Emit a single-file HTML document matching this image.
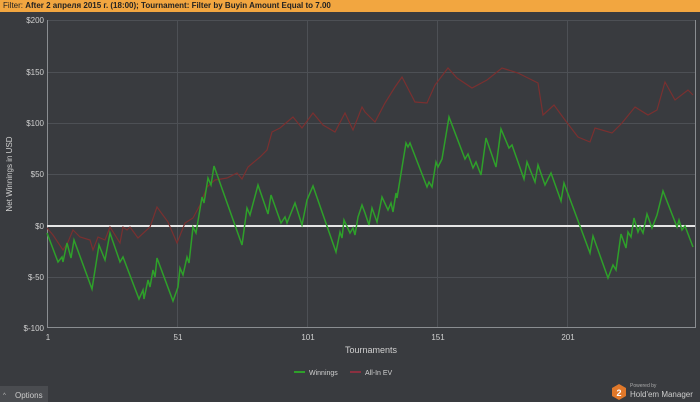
<!DOCTYPE html>
<html><head><meta charset="utf-8"><style>
html,body{margin:0;padding:0;width:700px;height:402px;overflow:hidden;background:#393b3f;font-family:"Liberation Sans",sans-serif;}
.hdr{position:absolute;left:0;top:0;width:700px;height:12px;background:#f2a640;font-size:8px;line-height:12px;color:#222;padding-left:3px;white-space:nowrap;}
.hdr b{font-weight:bold;}
svg{position:absolute;left:0;top:0;}
</style></head><body>
<div class="hdr">Filter: <b>After 2 апреля 2015 г. (18:00); Tournament: Filter by Buyin Amount Equal to 7.00</b></div>
<svg width="700" height="402" viewBox="0 0 700 402">
<g stroke="#4d5055" stroke-width="1">
<line x1="47" y1="20.5" x2="695" y2="20.5"/><line x1="47" y1="72.5" x2="695" y2="72.5"/>
<line x1="47" y1="123.5" x2="695" y2="123.5"/><line x1="47" y1="174.5" x2="695" y2="174.5"/>
<line x1="47" y1="277.5" x2="695" y2="277.5"/>
<line x1="177.5" y1="20" x2="177.5" y2="328"/><line x1="307.5" y1="20" x2="307.5" y2="328"/>
<line x1="437.5" y1="20" x2="437.5" y2="328"/><line x1="567.5" y1="20" x2="567.5" y2="328"/>
</g>
<g stroke="#8a8d91" stroke-width="1"><line x1="47.5" y1="20" x2="47.5" y2="328"/><line x1="47" y1="327.5" x2="695" y2="327.5"/><line x1="695.5" y1="20" x2="695.5" y2="328"/></g>
<line x1="47" y1="226" x2="695" y2="226" stroke="#e6e6e6" stroke-width="2"/>
<polyline fill="none" stroke="#7a3030" stroke-width="1.2" points="47,228 53,235 63,250 68,242 73,230 80,237 90,240 93,250 98,237 105,240 110,227 120,243 123,227 127,230 130,227 138,238 150,227 157,207 168,222 177,243 185,223 193,218 200,205 207,187 215,180 227,178 237,173 242,179 248,167 260,157 267,150 272,132 280,128 293,117 302,128 313,113 323,125 335,132 345,113 353,130 362,107 365,112 375,122 385,103 395,87 402,77 415,102 427,103 435,85 448,68 457,78 472,88 487,80 502,68 518,73 538,83 543,115 554,105 565,120 578,137 590,142 595,128 612,133 622,123 635,107 648,115 657,110 665,82 675,100 688,90 693,95"/>
<polyline fill="none" stroke="#2ea02a" stroke-width="1.5" points="47,233 58,262 62,257 63,262 67,243 71,258 74,240 92,289 99,245 105,260 110,233 120,262 123,257 139,299 143,290 144,299 148,280 150,287 153,270 155,277 157,258 173,301 178,287 180,268 183,275 187,257 189,263 193,227 196,233 202,197 204,203 208,178 211,185 214,166 242,245 247,208 250,215 258,185 268,214 271,195 281,223 285,217 287,223 295,203 302,225 307,200 313,186 336,252 340,232 342,238 344,220 350,233 353,228 355,235 358,217 362,205 365,213 369,225 372,208 377,222 382,197 388,210 391,203 393,212 396,193 397,198 406,143 408,147 410,143 427,187 429,182 432,187 436,162 438,167 442,159 449,117 465,159 468,154 473,168 476,162 481,175 486,138 496,167 501,129 509,148 512,145 524,179 527,162 535,182 538,165 545,185 551,173 561,201 564,183 590,253 593,236 608,278 613,265 616,270 621,234 626,248 628,232 631,237 634,218 638,232 640,227 643,233 647,214 652,228 657,215 663,191 677,227 679,220 682,230 685,226 693,247"/>
<g font-size="8" fill="#d0d0d0" text-anchor="end">
<text x="44" y="23">$200</text><text x="44" y="75">$150</text><text x="44" y="126">$100</text>
<text x="44" y="177">$50</text><text x="44" y="229">$0</text><text x="44" y="280">$-50</text><text x="44" y="331">$-100</text>
</g>
<g font-size="8" fill="#d0d0d0" text-anchor="middle">
<text x="48" y="340">1</text><text x="178" y="340">51</text><text x="308" y="340">101</text><text x="438" y="340">151</text><text x="568" y="340">201</text>
<text x="371" y="353" font-size="9">Tournaments</text>
</g>
<text x="12" y="174" font-size="8" fill="#d0d0d0" text-anchor="middle" transform="rotate(-90 12 174)">Net Winnings in USD</text>
<line x1="294" y1="372" x2="305" y2="372" stroke="#2ea02a" stroke-width="2"/>
<text x="309" y="375" font-size="7" fill="#d0d0d0">Winnings</text>
<line x1="350" y1="372" x2="361" y2="372" stroke="#8a3040" stroke-width="2"/>
<text x="365" y="375" font-size="7" fill="#d0d0d0">All-In EV</text>
<rect x="0" y="386" width="48" height="16" fill="#4a4c50"/>
<text x="3" y="397" font-size="6" fill="#bbb">^</text>
<text x="15" y="398" font-size="8" fill="#ccc">Options</text>
<polygon points="619,384 626,388 626,396 619,400 612,396 612,388" fill="#e0782a"/>
<text x="619" y="396" font-size="9" font-weight="bold" fill="#fff" text-anchor="middle">2</text>
<text x="630" y="387" font-size="5" fill="#aaa">Powered by</text>
<text x="630" y="397" font-size="8" fill="#ccc">Hold'em Manager</text>
</svg>
</body></html>
